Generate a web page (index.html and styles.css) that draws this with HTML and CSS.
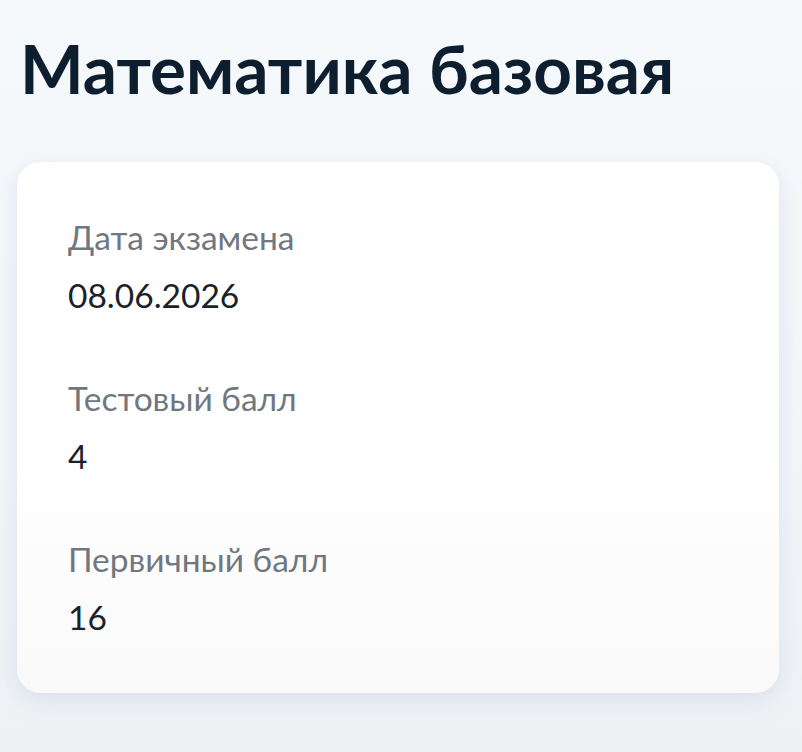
FILE: index.html
```html
<!DOCTYPE html>
<html lang="ru">

<head>
	<meta charset="utf-8">
	<title>Математика базовая</title>
	<link rel="stylesheet" href="styles.css">
</head>

<body>
	<main class="exam">
		<h1 class="exam-title">Математика базовая</h1>

		<section class="exam-card">
			<div class="field">
				<div class="field-label">Дата экзамена</div>
				<div class="field-value">08.06.2026</div>
			</div>
			<div class="field">
				<div class="field-label">Тестовый балл</div>
				<div class="field-value">4</div>
			</div>
			<div class="field">
				<div class="field-label">Первичный балл</div>
				<div class="field-value">16</div>
			</div>
		</section>
	</main>
</body>

</html>
```

FILE: styles.css
```css
html,
body {
	height: 100%;
}

body {
	margin: 0;
	background: linear-gradient(180deg, #f6f9fb 0%, #f3f6f9 60%, #eef1f4 100%);
	font-family: Lato, "Noto Sans", sans-serif;
}

.exam {
	padding: 28px 23px 0 17px;
}

.exam-title {
	margin: 0 0 54px 3px;
	font-size: 67.4px;
	line-height: 80px;
	font-weight: 700;
	color: #0d1e2e;
}

.exam-card {
	padding: 55px 51px 56px;
	background: linear-gradient(180deg, #ffffff 0%, #ffffff 55%, #f9f9fa 100%);
	border-radius: 24px;
	box-shadow: 0 6px 22px rgba(175, 190, 225, 0.35);
}

.field+.field {
	margin-top: 63px;
}

.field-label,
.field-value {
	font-size: 33.5px;
	line-height: 40px;
}

.field-label {
	color: #70777e;
}

.field-value {
	margin-top: 18px;
	color: #19222a;
}
```
